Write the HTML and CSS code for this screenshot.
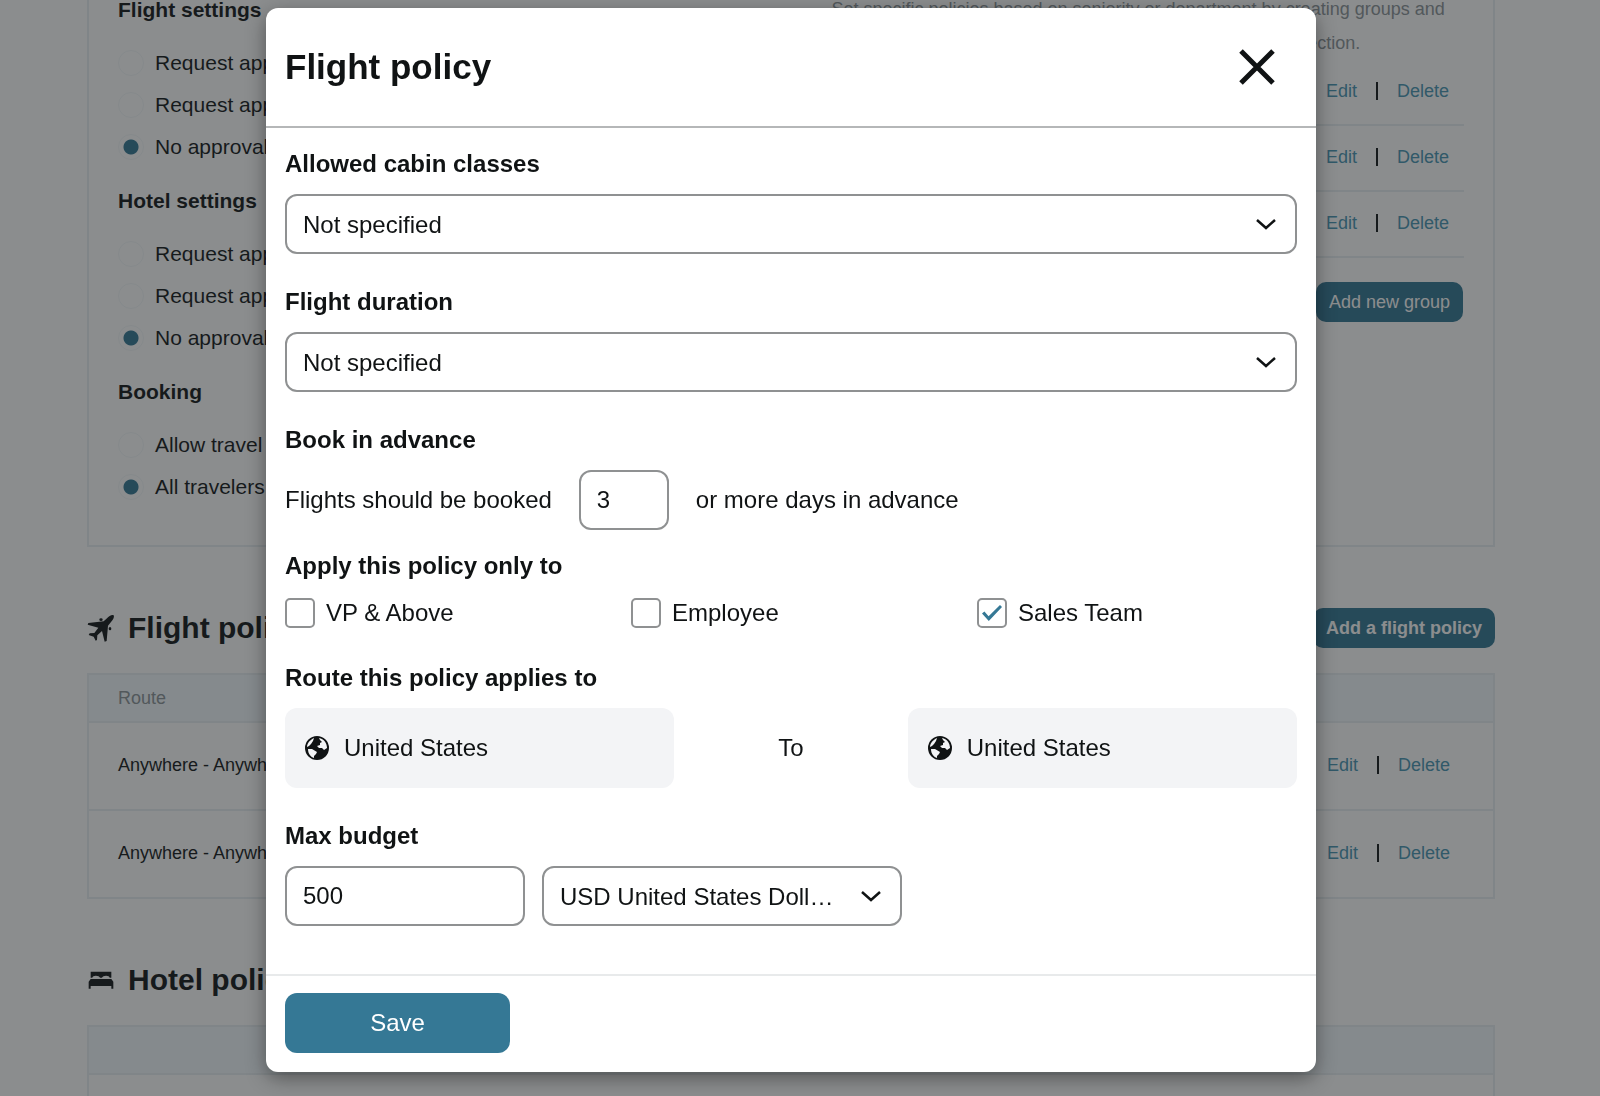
FILE: index.html
```html
<!DOCTYPE html>
<html lang="en">
<head>
    <meta charset="UTF-8">
    <meta name="viewport" content="width=device-width, initial-scale=1.0">
    <title>Flight policy</title>
    <link rel="stylesheet" href="styles.css">
</head>
<body>
    <svg width="0" height="0" class="sprite" aria-hidden="true">
        <symbol id="icon-globe" viewBox="0 0 24 24">
            <circle cx="12" cy="12" r="12" fill="currentColor"/>
            <path fill="#f3f4f6" d="M2 11 C2 7 5 4 9 2 L8 5 L6 8 L4 10 Z"/>
            <path fill="#f3f4f6" d="M14 2 C19 3 22 7 22 12 L19 14 L17 12 L14 12 L12 10 L15 9 L15 7 L17 6 L15 4 Z"/>
            <path fill="#f3f4f6" d="M3 13 L7 13 L12 16 L11 18 L9 20 L9 22 C6 21 3 18 3 13 Z"/>
        </symbol>
        <symbol id="icon-chevron" viewBox="0 0 20 12">
            <path d="M1 2 L10 10 L19 2" fill="none" stroke="currentColor" stroke-width="2.5"/>
        </symbol>
    </svg>

    <div class="page">
        <div class="settings-card">
            <div class="approval-settings">
                <fieldset>
                    <legend>Flight settings</legend>
                    <label><input type="radio" name="flightApproval"> Request approval</label>
                    <label><input type="radio" name="flightApproval"> Request approval</label>
                    <label><input type="radio" name="flightApproval" checked> No approval</label>
                </fieldset>
                <fieldset>
                    <legend>Hotel settings</legend>
                    <label><input type="radio" name="hotelApproval"> Request approval</label>
                    <label><input type="radio" name="hotelApproval"> Request approval</label>
                    <label><input type="radio" name="hotelApproval" checked> No approval</label>
                </fieldset>
                <fieldset>
                    <legend>Booking</legend>
                    <label><input type="radio" name="booking"> Allow travel</label>
                    <label><input type="radio" name="booking" checked> All travelers</label>
                </fieldset>
            </div>
            <div class="groups">
                <p>Set specific policies based on seniority or department by creating groups and assigning them to each policy, you can edit them all in this section.</p>
                <ul>
                    <li class="actions"><a href="#">Edit</a><span class="bar"></span><a href="#">Delete</a></li>
                    <li class="actions"><a href="#">Edit</a><span class="bar"></span><a href="#">Delete</a></li>
                    <li class="actions"><a href="#">Edit</a><span class="bar"></span><a href="#">Delete</a></li>
                </ul>
                <button type="button" class="small-button">Add new group</button>
            </div>
        </div>

        <div class="section-header">
            <svg class="section-icon" viewBox="12 14 84 84" aria-hidden="true">
                <path fill="currentColor" d="M92 18 C86 15 78 21 72 27 L62 36 L16 41 L14 46 L46 55 L34 71 L20 72 L17 77 L32 82 L38 94 L42 92 L43 78 L57 65 L65 97 L71 95 L75 49 L84 38 C90 32 95 24 92 18 Z"/>
                <ellipse cx="54" cy="31" rx="5" ry="4" fill="currentColor"/>
                <ellipse cx="81" cy="58" rx="4" ry="5" fill="currentColor"/>
            </svg>
            <h2>Flight policies</h2>
            <button type="button" class="small-button strong">Add a flight policy</button>
        </div>
        <table class="policies">
            <thead>
                <tr><th>Route</th><th></th></tr>
            </thead>
            <tbody>
                <tr>
                    <td>Anywhere - Anywhere</td>
                    <td><div class="actions"><a href="#">Edit</a><span class="bar"></span><a href="#">Delete</a></div></td>
                </tr>
                <tr>
                    <td>Anywhere - Anywhere</td>
                    <td><div class="actions"><a href="#">Edit</a><span class="bar"></span><a href="#">Delete</a></div></td>
                </tr>
            </tbody>
        </table>

        <div class="section-header">
            <svg class="section-icon" viewBox="9 11 84 84" aria-hidden="true">
                <path fill="currentColor" d="M20 28 H82 V46 H77 C77 38 56 38 54 46 H48 C46 38 25 38 25 46 H20 Z"/>
                <path fill="currentColor" d="M20 50 H82 L88 58 V79 H82 V71 H20 V79 H14 V58 Z"/>
            </svg>
            <h2>Hotel policies</h2>
        </div>
        <table class="policies">
            <thead>
                <tr><th></th><th></th></tr>
            </thead>
            <tbody>
                <tr><td></td><td></td></tr>
            </tbody>
        </table>
    </div>

    <div class="overlay">
        <form class="modal" role="dialog" aria-labelledby="modalTitle">
            <div class="modal-header">
                <h1 id="modalTitle">Flight policy</h1>
                <button type="button" class="close" aria-label="Close">
                    <svg viewBox="0 0 36 36"><path d="M2 2 L34 34 M34 2 L2 34" stroke="currentColor" stroke-width="5"/></svg>
                </button>
            </div>

            <div class="modal-body">
                <div class="field">
                    <label class="title" for="cabin">Allowed cabin classes</label>
                    <div class="select">
                        <select id="cabin"><option>Not specified</option></select>
                        <svg><use href="#icon-chevron"/></svg>
                    </div>
                </div>
                <div class="field">
                    <label class="title" for="duration">Flight duration</label>
                    <div class="select">
                        <select id="duration"><option>Not specified</option></select>
                        <svg><use href="#icon-chevron"/></svg>
                    </div>
                </div>
                <div class="field tight">
                    <label class="title" for="days">Book in advance</label>
                    <div class="advance">
                        <span>Flights should be booked</span>
                        <input type="text" id="days" value="3">
                        <span>or more days in advance</span>
                    </div>
                </div>
                <div class="field" role="group" aria-labelledby="applyTitle">
                    <div class="title" id="applyTitle">Apply this policy only to</div>
                    <div class="checks">
                        <label><input type="checkbox"> VP &amp; Above</label>
                        <label><input type="checkbox"> Employee</label>
                        <label><input type="checkbox" checked> Sales Team</label>
                    </div>
                </div>
                <div class="field">
                    <div class="title">Route this policy applies to</div>
                    <div class="route">
                        <div class="place"><svg><use href="#icon-globe"/></svg>United States</div>
                        <span>To</span>
                        <div class="place"><svg><use href="#icon-globe"/></svg>United States</div>
                    </div>
                </div>
                <div class="field">
                    <label class="title" for="budget">Max budget</label>
                    <div class="budget">
                        <input type="text" id="budget" value="500">
                        <div class="select">
                            <select aria-label="Currency"><option>USD United States Dollars</option></select>
                            <svg><use href="#icon-chevron"/></svg>
                        </div>
                    </div>
                </div>
            </div>

            <div class="modal-footer">
                <button type="submit" class="save">Save</button>
            </div>
        </form>
    </div>
</body>
</html>
```
FILE: styles.css
```css
* {
    box-sizing: border-box;
}
body {
    margin: 0;
    height: 100vh;
    overflow: hidden;
    background: white;
    color: #15191b;
    font-family: "Liberation Sans", Arial, sans-serif;
    font-size: 18px;
}
button, input, select {
    font-family: inherit;
    font-size: inherit;
    color: inherit;
}
h1, h2, p, ul {
    margin: 0;
    padding: 0;
}
a {
    color: #4a96b4;
    text-decoration: none;
}
.sprite {
    position: absolute;
}

/* Page behind the dialog */
.page {
    height: 100vh;
    overflow: hidden;
    padding: 0 105px 0 87px;
}
.settings-card {
    display: flex;
    justify-content: space-between;
    height: 547px;
    border: 2px solid #e9eff2;
    border-top: none;
    padding: 0 29px;
}
.approval-settings {
    font-size: 21px;
}
fieldset {
    border: none;
    margin: 0 0 23px;
    padding: 0;
}
legend {
    padding: 0;
    margin-bottom: 22px;
    font-weight: bold;
    line-height: 20px;
}
fieldset label {
    display: flex;
    align-items: center;
    gap: 11px;
    height: 42px;
}
input[type="radio"] {
    appearance: none;
    width: 26px;
    height: 26px;
    margin: 0;
    border: 1px solid #f3f7f9;
    border-radius: 50%;
}
input[type="radio"]:checked {
    background: radial-gradient(circle, #357895 7px, transparent 8px);
}
.groups {
    width: 47%;
    margin-top: -8px;
}
.groups p {
    color: #8c9499;
    line-height: 34px;
}
.groups ul {
    list-style: none;
}
.groups li {
    height: 66px;
    padding: 0 15px 2px 0;
    border-bottom: 2px solid #e9eff2;
}
.actions {
    display: flex;
    align-items: center;
    justify-content: flex-end;
    gap: 19px;
}
.bar {
    width: 2px;
    height: 18px;
    background: #15191b;
}
.small-button {
    display: block;
    margin-left: auto;
    height: 40px;
    padding: 0 13px;
    border: none;
    border-radius: 10px;
    background: #357895;
    color: white;
}
.strong {
    font-weight: bold;
}
.groups .small-button {
    margin-top: 24px;
    margin-right: 1px;
}
.section-header {
    display: flex;
    align-items: center;
    gap: 13px;
    height: 40px;
    margin: 61px 0 25px;
}
.section-icon {
    width: 28px;
    height: 28px;
}
h2 {
    font-size: 30px;
}
.policies {
    width: 100%;
    border: 2px solid #e9eff2;
    border-collapse: collapse;
}
.policies tr {
    border-bottom: 2px solid #e9eff2;
}
.policies th {
    height: 48px;
    padding: 0 43px 0 29px;
    background: #f3f9fc;
    color: #8c9499;
    font-weight: normal;
    text-align: left;
}
.policies td {
    height: 88px;
    padding: 0 43px 2px 29px;
}

/* Dialog */
.overlay {
    position: fixed;
    inset: 0;
    padding: 8px 18px 24px 0;
    background: rgba(24, 28, 30, 0.5);
}
.modal {
    max-width: 1050px;
    margin: 0 auto;
    background: white;
    color: #101314;
    border-radius: 12px;
    box-shadow: 0 6px 20px rgba(0, 0, 0, 0.4);
    font-size: 24px;
}
.modal-header {
    display: flex;
    align-items: center;
    justify-content: space-between;
    height: 120px;
    padding: 0 41px 0 19px;
    border-bottom: 2px solid #b5b7b8;
}
h1 {
    font-size: 35px;
}
.close {
    padding: 0;
    border: none;
    background: none;
}
.close svg {
    display: block;
    width: 36px;
    height: 36px;
}
.modal-body {
    padding: 22px 19px 48px;
}
.field {
    margin-bottom: 34px;
}
.field.tight {
    margin-bottom: 22px;
}
.field:last-child {
    margin-bottom: 0;
}
.title {
    display: block;
    margin-bottom: 16px;
    font-weight: bold;
    line-height: 28px;
}
.select {
    position: relative;
}
.select svg {
    position: absolute;
    right: 21px;
    top: 24px;
    width: 20px;
    height: 12px;
    pointer-events: none;
}
select, input[type="text"] {
    display: block;
    width: 100%;
    height: 60px;
    padding: 0 16px;
    border: 2px solid #8f9192;
    border-radius: 12px;
    background: white;
}
select {
    appearance: none;
    padding-right: 64px;
    text-overflow: ellipsis;
}
.advance {
    display: flex;
    align-items: center;
    gap: 27px;
}
.advance input[type="text"] {
    width: 90px;
}
.checks {
    display: grid;
    grid-template-columns: repeat(3, 1fr);
    gap: 26px;
}
.checks label {
    display: flex;
    align-items: center;
    gap: 11px;
    height: 34px;
}
input[type="checkbox"] {
    appearance: none;
    display: grid;
    place-items: center;
    width: 30px;
    height: 30px;
    margin: 0;
    border: 2px solid #8f9192;
    border-radius: 5px;
}
input[type="checkbox"]:checked::before {
    content: "";
    width: 20px;
    height: 16px;
    background: #357895;
    clip-path: polygon(0 53%, 12% 40%, 33% 70%, 90% 0, 100% 13%, 34% 100%);
}
.route {
    display: grid;
    grid-template-columns: 5fr 3fr 5fr;
    align-items: center;
    text-align: center;
}
.place {
    display: flex;
    align-items: center;
    gap: 15px;
    height: 80px;
    padding: 0 20px;
    border-radius: 12px;
    background: #f3f4f6;
}
.place svg {
    width: 24px;
    height: 24px;
}
.budget {
    display: flex;
    gap: 17px;
}
.budget input[type="text"] {
    width: 240px;
}
.budget .select {
    width: 360px;
}
.modal-footer {
    padding: 17px 19px 19px;
    border-top: 2px solid #e8eaeb;
}
.save {
    display: block;
    width: 225px;
    height: 60px;
    border: none;
    border-radius: 12px;
    background: #357895;
    color: white;
}
```
